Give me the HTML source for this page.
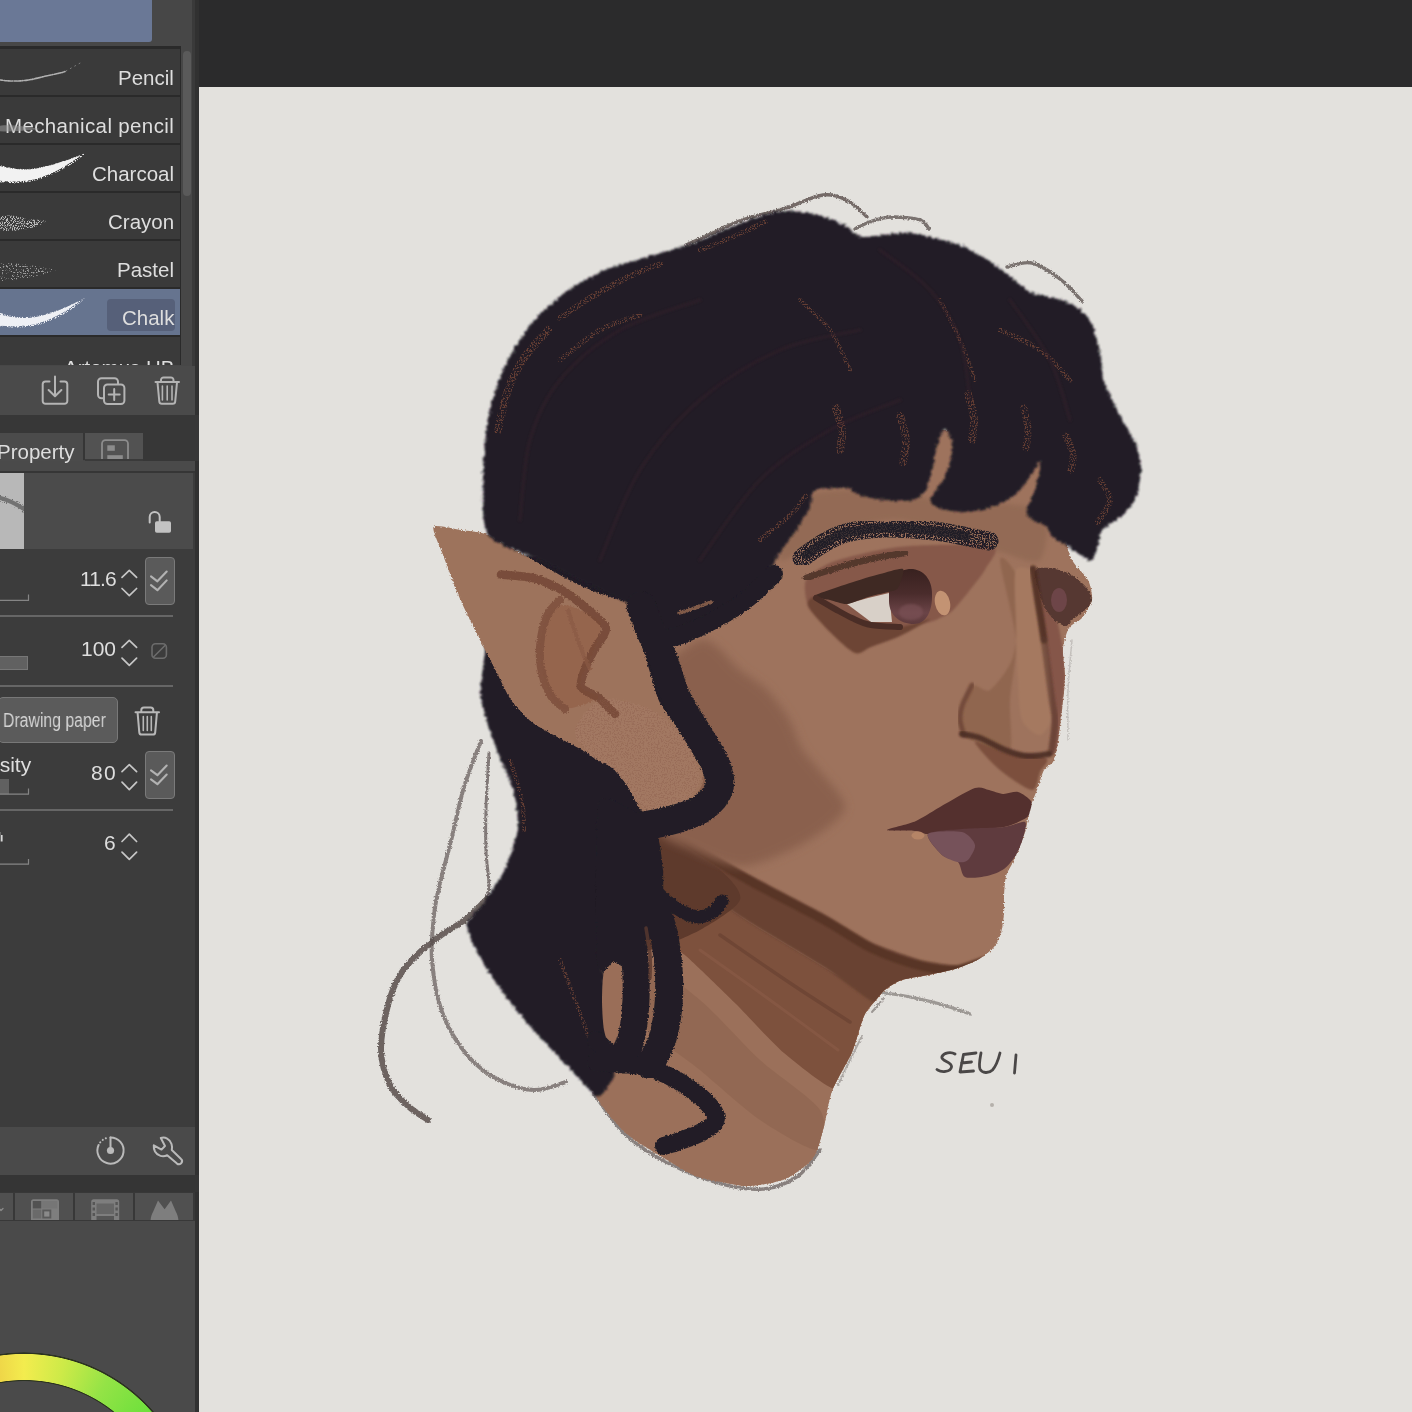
<!DOCTYPE html>
<html>
<head>
<meta charset="utf-8">
<title>Clip Studio Paint</title>
<style>
html,body{margin:0;padding:0;}
body{width:1412px;height:1412px;overflow:hidden;background:#2b2b2c;position:relative;font-family:"Liberation Sans",sans-serif;}
.abs{position:absolute;}
.lbl,.num,.txt{will-change:transform;}
#canvas{left:199px;top:87px;width:1213px;height:1325px;background:#e3e1dd;}
#panel{left:0;top:0;width:195px;height:1412px;background:#474747;}
#pedge{left:195px;top:0;width:4px;height:1412px;background:#313131;}
.row{position:absolute;left:0;width:180px;height:46px;background:#3a3a3a;}
.lbl{position:absolute;right:6px;color:#dedede;font-size:20.5px;white-space:nowrap;}
.num{position:absolute;color:#dedede;font-size:21px;white-space:nowrap;text-align:right;}
.sep{position:absolute;left:0;width:173px;height:2px;background:#666;}
svg{position:absolute;left:0;top:0;overflow:visible;}
</style>
</head>
<body>
<div class="abs" id="canvas"></div>
<div class="abs" id="panel"></div>
<div class="abs" id="pedge"></div>

<!-- PANEL-START -->
<div class="abs" style="left:0;top:0;width:152px;height:42px;background:#6a7896;border-radius:0 0 3px 0;"></div>
<div class="abs" style="left:0;top:46px;width:181px;height:319px;background:#2a2a2a;"></div>
<div class="row" style="top:49px;height:46px;"><div class="lbl" style="top:17px;">Pencil</div></div>
<div class="row" style="top:97px;height:46px;"><div class="lbl" style="top:17px;letter-spacing:0.36px;right:5.6px;">Mechanical pencil</div></div>
<div class="row" style="top:145px;height:46px;"><div class="lbl" style="top:17px;">Charcoal</div></div>
<div class="row" style="top:193px;height:46px;"><div class="lbl" style="top:17px;">Crayon</div></div>
<div class="row" style="top:241px;height:46px;"><div class="lbl" style="top:17px;">Pastel</div></div>
<div class="row" style="top:289px;height:46px;background:#66748f;"><div class="abs" style="left:107px;top:10px;width:68px;height:32px;background:#566079;border-radius:4px;"></div><div class="lbl" style="top:17px;">Chalk</div></div>
<div class="row" style="top:337px;height:28px;overflow:hidden;"><div class="lbl" style="top:19px;">Artemus HB</div></div>
<div class="abs" style="left:183px;top:51px;width:8px;height:145px;background:#5a5a5a;border-radius:4px;"></div>
<div class="abs" style="left:0;top:366px;width:195px;height:49px;background:#4a4a4a;"></div>
<div class="abs" style="left:0;top:415px;width:199px;height:18px;background:#373737;"></div>
<div class="abs" style="left:143px;top:433px;width:56px;height:28px;background:#373737;"></div>
<div class="abs" style="left:0;top:433px;width:83px;height:28px;background:#4b4b4b;"></div>
<div class="abs" style="left:83px;top:433px;width:2px;height:27px;background:#363636;"></div>
<div class="abs" style="left:85px;top:433px;width:58px;height:26px;background:#525252;"></div>
<div class="abs" style="left:85px;top:459px;width:58px;height:2px;background:#3a3a3a;"></div>
<div class="abs" style="left:0;top:461px;width:195px;height:10px;background:#4a4a4a;"></div>
<div class="abs" style="left:0;top:471px;width:195px;height:2px;background:#363636;"></div>
<div class="abs" style="left:0;top:473px;width:193px;height:76px;background:#4b4b4b;"></div>
<div class="abs" style="left:0;top:473px;width:24px;height:76px;background:#b8b8b8;"></div>
<div class="abs" style="left:0;top:549px;width:195px;height:578px;background:#3c3c3c;"></div>
<div class="abs" style="left:193px;top:473px;width:2px;height:76px;background:#3c3c3c;"></div>
<div class="abs txt" style="left:-3px;top:440px;color:#dedede;font-size:20.5px;">Property</div>
<div class="num" style="right:1296px;top:567px;letter-spacing:-0.9px;">11.6</div>
<div class="num" style="right:1296px;top:637px;">100</div>
<div class="num" style="right:1295px;top:761px;letter-spacing:1.300px;">80</div>
<div class="num" style="right:1296px;top:831px;">6</div>
<div class="sep" style="top:615px;"></div>
<div class="sep" style="top:685px;"></div>
<div class="sep" style="top:809px;"></div>
<div class="abs" style="left:-2px;top:697px;width:120px;height:46px;background:#5b5b5b;border:1px solid #787878;border-radius:5px;box-sizing:border-box;"></div>
<div class="abs txt" style="left:3px;top:709px;color:#d4d4d4;font-size:20px;white-space:nowrap;transform-origin:0 0;transform:scaleX(0.79);">Drawing paper</div>
<div class="abs txt" style="left:-12px;top:753px;color:#dedede;font-size:21px;white-space:nowrap;">nsity</div>
<div class="abs" style="left:145px;top:557px;width:30px;height:48px;background:#5a5a5a;border:1px solid #7a7a7a;border-radius:4px;box-sizing:border-box;"></div>
<div class="abs" style="left:145px;top:751px;width:30px;height:48px;background:#5a5a5a;border:1px solid #7a7a7a;border-radius:4px;box-sizing:border-box;"></div>
<div class="abs" style="left:-1px;top:656px;width:29px;height:14px;background:#616161;border:1px solid #777;box-sizing:border-box;"></div>
<div class="abs" style="left:-1px;top:779px;width:10px;height:15px;background:#616161;"></div>
<div class="abs" style="left:0;top:1127px;width:195px;height:48px;background:#4a4a4a;"></div>
<div class="abs" style="left:0;top:1175px;width:199px;height:17px;background:#353535;"></div>
<div class="abs" style="left:0;top:1192px;width:195px;height:220px;background:#4a4a4a;"></div>
<div class="abs" style="left:0;top:1192px;width:195px;height:29px;background:#383838;"></div>
<div class="abs" style="left:0;top:1193px;width:13px;height:27px;background:#505050;"></div>
<div class="abs" style="left:15px;top:1193px;width:58px;height:27px;background:#505050;"></div>
<div class="abs" style="left:75px;top:1193px;width:58px;height:27px;background:#505050;"></div>
<div class="abs" style="left:135px;top:1193px;width:58px;height:27px;background:#505050;"></div>
<div class="abs" style="left:0;top:1300px;width:195px;height:112px;overflow:hidden;"><div style="position:absolute;left:-148.500px;top:51.500px;width:344px;height:344px;border-radius:50%;background:#2c3320;-webkit-mask:radial-gradient(circle closest-side,transparent 0,transparent 142.500px,#000 143.200px,#000 171.300px,transparent 172px);mask:radial-gradient(circle closest-side,transparent 0,transparent 142.500px,#000 143.200px,#000 171.300px,transparent 172px);"></div><div style="position:absolute;left:-147.500px;top:52.500px;width:342px;height:342px;border-radius:50%;background:conic-gradient(from -40deg at 50% 50%, #e59a3a 0deg, #ecc844 25deg, #f3ec4e 40deg, #cdea48 54deg, #94e346 70deg, #6ee03c 88deg, #52d83a 110deg);-webkit-mask:radial-gradient(circle closest-side,transparent 0,transparent 143.600px,#000 144.300px,#000 169.700px,transparent 170.400px);mask:radial-gradient(circle closest-side,transparent 0,transparent 143.600px,#000 144.300px,#000 169.700px,transparent 170.400px);"></div></div>
<div class="abs" id="dstrip" style="left:192px;top:0;width:3px;height:366px;background:#3a3a3a;"></div>
<svg id="picons" width="199" height="1412" viewBox="0 0 199 1412" fill="none" stroke-linecap="round" stroke-linejoin="round">
<defs>
<filter id="grain" x="-5%" y="-20%" width="110%" height="140%"><feTurbulence type="fractalNoise" baseFrequency="0.9" numOctaves="2" seed="3" result="n"/><feColorMatrix in="n" type="matrix" values="0 0 0 0 0  0 0 0 0 0  0 0 0 0 0  0 0 0 -9 4.6" result="m"/><feComposite in="SourceGraphic" in2="m" operator="in"/></filter>
<filter id="grain2" x="-5%" y="-20%" width="110%" height="140%"><feTurbulence type="fractalNoise" baseFrequency="0.8" numOctaves="2" seed="8" result="n"/><feColorMatrix in="n" type="matrix" values="0 0 0 0 0  0 0 0 0 0  0 0 0 0 0  0 0 0 -9 3.9" result="m"/><feComposite in="SourceGraphic" in2="m" operator="in"/></filter>
<clipPath id="cl0"><rect x="0" y="49" width="180" height="316"/></clipPath>
<clipPath id="cth"><rect x="0" y="473" width="24" height="76"/></clipPath>
<clipPath id="ctab"><rect x="0" y="1193" width="195" height="27"/></clipPath>
<clipPath id="ctab2"><rect x="85" y="433" width="58" height="26"/></clipPath>
</defs>
<!-- brush previews -->
<g clip-path="url(#cl0)">
<path d="M-2 79.5 C10 82 25 81.5 38 78 S58 74 65 71.5" stroke="#d8d8d8" stroke-width="1.6" stroke-dasharray="2.5 1.2 1 1.5 3 1" opacity="0.75"/>
<path d="M66 71 L82 62" stroke="#bbb" stroke-width="1" stroke-dasharray="1 4" opacity="0.5"/>
<path d="M-2 126 C8 124 22 126 40 129 C22 131 8 132 -2 131Z" fill="#9a9a9a" opacity="0.55" stroke="none"/>
<path d="M-2 164 C8 168 18 169.5 28 169 C42 168 60 163 86 153 C72 166 52 176 34 181 C20 184 8 184 -2 182Z" fill="#f2f2f2" stroke="none" filter="url(#grain)"/>
<path d="M-2 165.500C8 168.500 18 170 28 169.500C42 168.500 60 163 80 155.500C66 167 50 175 34 179.500C20 182 8 182 -2 180.500Z" fill="#f2f2f2" stroke="none"/>
<path d="M-2 217 C8 214 18 216 26 219 C34 220 40 219 46 221 C40 226 30 229 20 230 C10 232 4 231 -2 230Z" fill="#bdbdbd" stroke="none" filter="url(#grain)"/>
<path d="M-2 264 C12 262 30 265 56 270 C40 276 20 281 -2 281Z" fill="#b8b8b8" stroke="none" filter="url(#grain2)" opacity="0.8"/>
<path d="M-2 312 C8 316 18 317.5 28 317 C42 316 60 311 85 298 C72 312 52 322 34 326 C20 328.5 8 328 -2 326Z" fill="#eef0f5" stroke="none" filter="url(#grain)"/>
<path d="M-2 314C8 317 18 318.500 28 318C42 317 60 311 79 301C66 312.500 50 320.500 34 324.500C20 326.500 8 326.500 -2 325.500Z" fill="#eef0f5" stroke="none"/>
</g>
<!-- toolbar icons -->
<g stroke="#b4b4b4" stroke-width="2">
<path d="M49.5 381.5H45.5a2.8 2.8 0 0 0-2.8 2.8V401a2.8 2.8 0 0 0 2.8 2.8H64.5a2.8 2.8 0 0 0 2.8-2.8V384.3a2.8 2.8 0 0 0-2.8-2.8H60.5"/>
<path d="M55 376.5V396M48.6 390L55 396.3L61.4 390"/>
<rect x="98" y="378.2" width="20" height="20" rx="3.5"/>
<rect x="104" y="384.5" width="20.4" height="19.5" rx="3.5" fill="#4a4a4a"/>
<path d="M114.2 389v11M108.7 394.5h11"/>
<path d="M155.5 382H179M161 381.5V380a2.6 2.6 0 0 1 2.6-2.6h7.3A2.6 2.6 0 0 1 173.500 380v1.500M157.500 382.500l1.800 19a2.500 2.500 0 0 0 2.500 2.300h10.900a2.500 2.500 0 0 0 2.500-2.300l1.800-19"/>
<path d="M162.400 386V400M167.200 386V400M172 386V400" stroke-width="1.600"/>
</g>
<!-- tab2 icon -->
<g clip-path="url(#ctab2)"><rect x="102" y="440.2" width="26" height="26" rx="3.500" stroke="#8c8c8c" stroke-width="1.800"/><rect x="107.300" y="445.300" width="7.500" height="5.500" fill="#8c8c8c"/><rect x="107.300" y="455.200" width="15.500" height="5" fill="#8c8c8c"/></g>
<!-- thumbnail stroke -->
<g clip-path="url(#cth)"><path d="M-4 497 C6 499 16 503 28 512" stroke="#6c6c6c" stroke-width="7" filter="url(#grain2)"/><path d="M-4 497 C6 499 16 503 28 512" stroke="#727272" stroke-width="4"/></g>
<!-- unlock -->
<rect x="155" y="521.300" width="16" height="11.400" rx="1.800" fill="#c2c2c2"/>
<path d="M149.700 522.500V517a5 5 0 0 1 10 0V521.500" stroke="#c2c2c2" stroke-width="2"/>
<!-- chevrons -->
<g stroke="#c6c6c6" stroke-width="1.700">
<path d="M122 577.400l7.300-7l7.300 7M122 588.500l7.300 7.200l7.300-7.200"/>
<path d="M122 647.400l7.300-7l7.300 7M122 658.200l7.300 7.200l7.300-7.200"/>
<path d="M122 771.600l7.300-7l7.300 7M122 782.200l7.300 7.400l7.300-7.400"/>
<path d="M122 841.500l7.300-7.300l7.300 7.300M122 852.200l7.300 7.200l7.300-7.200"/>
</g>
<!-- double checks -->
<g stroke="#b2b2b2" stroke-width="2.100">
<path d="M151 576.300l6.400 5l9.300-9.800M151 585.200l6.400 5l9.300-9.800"/>
<path d="M151 770.400l6.400 4.800l9.300-9.600M151 779.400l6.400 4.800l9.300-9.600"/>
</g>
<!-- disabled icon -->
<rect x="152" y="643.800" width="14.400" height="14.400" rx="3.500" stroke="#6c6c6c" stroke-width="1.600"/><path d="M153.500 657L165 645.500" stroke="#6c6c6c" stroke-width="1.600"/>
<!-- trash 2 -->
<g stroke="#b8b8b8" stroke-width="2">
<path d="M135.500 712.300H159M141.300 712V710a2.600 2.600 0 0 1 2.600-2.600h6.800a2.600 2.600 0 0 1 2.600 2.600v2M137.600 712.800l1.700 19.500a2.500 2.500 0 0 0 2.500 2.300h10.900a2.500 2.500 0 0 0 2.500-2.300l1.700-19.500"/>
<path d="M143.300 716.500V730.500M147.300 716.500V730.500M151.300 716.500V730.500" stroke-width="1.600"/>
</g>
<!-- slider brackets -->
<g stroke="#858585" stroke-width="1.200" stroke-linecap="butt">
<path d="M0 600.400H28.500V594.500M0 794.200H28.500V788.500M0 864.200H28.500V859"/>
</g>
<!-- fragment of label -->
<path d="M-0.500 832V841.500M1.800 835V841.500" stroke="#d8d8d8" stroke-width="1.600" stroke-linecap="butt"/>
<!-- bottom toolbar icons -->
<g stroke="#bababa" stroke-width="2">
<path d="M110.500 1137.400A13.100 13.100 0 1 1 98.600 1145"/>
<path d="M100.200 1142.400A13.100 13.100 0 0 1 107.500 1137.800" stroke-dasharray="0.100 3.400"/>
<path d="M110.500 1137.400V1150"/>
<circle cx="110.500" cy="1150.500" r="3.600" fill="#bababa" stroke="none"/>
<path d="M160.800 1138C165 1136.500 170 1139 171.500 1144C172.300 1146.500 172.200 1148.500 171.800 1150L180.800 1158.800A2.900 2.900 0 0 1 177 1163.600L167.200 1155.200C163 1157.500 157.500 1156 155 1151.500C154 1149.500 153.600 1147.500 153.800 1145.300L161.500 1149.600L165 1146Z"/>
</g>
<!-- bottom tabs icons -->
<g clip-path="url(#ctab)" fill="#7e7e7e" stroke="none">
<path d="M-1 1208.500l2 2l2-2" stroke="#8a8a8a" stroke-width="1.300" fill="none"/>
<path d="M33.500 1199.300h23a2.500 2.500 0 0 1 2.500 2.500V1222H31V1201.800a2.500 2.500 0 0 1 2.500-2.500z"/>
<rect x="32.800" y="1201" width="8.500" height="7.500" fill="#525252"/><rect x="42.300" y="1209.500" width="9" height="9" fill="#5a5a5a"/><rect x="44.200" y="1211.400" width="5.200" height="5.200" fill="#8a8a8a"/><rect x="32.800" y="1209.500" width="8.500" height="9" fill="#6a6a6a"/><rect x="42.300" y="1201" width="15" height="7.500" fill="#767676"/>
<path d="M93.700 1199.300h23a2.500 2.500 0 0 1 2.500 2.500V1222H91.200V1201.800a2.500 2.500 0 0 1 2.500-2.500z"/>
<rect x="96.500" y="1203.500" width="17.500" height="10.500" fill="#666"/>
<g fill="#565656"><rect x="92.600" y="1202" width="2.400" height="3"/><rect x="92.600" y="1207.500" width="2.400" height="3"/><rect x="92.600" y="1213" width="2.400" height="3"/><rect x="115.400" y="1202" width="2.400" height="3"/><rect x="115.400" y="1207.500" width="2.400" height="3"/><rect x="115.400" y="1213" width="2.400" height="3"/><rect x="96.500" y="1216" width="17.500" height="5"/></g>
<path d="M150.500 1222c0-4 1-7 2.500-10l5-11.600l6.600 8.800l6.400-8.800l5 11.600c1.500 3 2.500 6 2.500 10z"/>
</g>
</svg>
<!-- PANEL-END -->

<svg id="art" width="1412" height="1412" viewBox="0 0 1412 1412">
<!-- ART-START -->
<defs><filter id="rough" x="-5%" y="-5%" width="110%" height="110%"><feTurbulence type="fractalNoise" baseFrequency="0.35" numOctaves="2" seed="5" result="n"/><feDisplacementMap in="SourceGraphic" in2="n" scale="5" xChannelSelector="R" yChannelSelector="G" result="d"/><feGaussianBlur in="d" stdDeviation="0.8"/></filter><filter id="rough2" x="-5%" y="-5%" width="110%" height="110%"><feTurbulence type="fractalNoise" baseFrequency="0.6" numOctaves="2" seed="11" result="n"/><feDisplacementMap in="SourceGraphic" in2="n" scale="3.5" xChannelSelector="R" yChannelSelector="G" result="d"/><feGaussianBlur in="d" stdDeviation="0.7"/></filter><filter id="soft" x="-10%" y="-10%" width="120%" height="120%"><feGaussianBlur stdDeviation="2.5"/></filter><filter id="soft1" x="-10%" y="-10%" width="120%" height="120%"><feGaussianBlur stdDeviation="1.2"/></filter><filter id="soft2" x="-10%" y="-10%" width="120%" height="120%"><feGaussianBlur stdDeviation="5"/></filter><filter id="chalk" x="-5%" y="-5%" width="110%" height="110%"><feTurbulence type="fractalNoise" baseFrequency="0.7" numOctaves="2" seed="21" result="n"/><feColorMatrix in="n" type="matrix" values="0 0 0 0 0  0 0 0 0 0  0 0 0 0 0  0 0 0 -7 3.6" result="m"/><feComposite in="SourceGraphic" in2="m" operator="in"/></filter><filter id="chalk2" x="-5%" y="-20%" width="110%" height="140%"><feTurbulence type="fractalNoise" baseFrequency="0.75" numOctaves="2" seed="4" result="n"/><feColorMatrix in="n" type="matrix" values="0 0 0 0 0  0 0 0 0 0  0 0 0 0 0  0 0 0 -8 4.9" result="m"/><feComposite in="SourceGraphic" in2="m" operator="in"/></filter><linearGradient id="irisg" x1="0" y1="0" x2="0" y2="1"><stop offset="0" stop-color="#38211f"/><stop offset="0.45" stop-color="#4a2c2c"/><stop offset="0.8" stop-color="#6b4447"/><stop offset="1" stop-color="#5d3a3c"/></linearGradient></defs>
<g filter="url(#rough2)">
<path d="M686.0 245.0 C690.8 242.8 705.7 236.2 715.0 232.0 C724.3 227.8 730.2 224.0 742.0 220.0 C753.8 216.0 772.5 212.2 786.0 208.0 C799.5 203.8 812.7 196.2 823.0 195.0 C833.3 193.8 840.7 197.3 848.0 201.0 C855.3 204.7 863.8 214.3 867.0 217.0" fill="none" stroke="#574d4b" stroke-width="3.4" stroke-linecap="round" stroke-linejoin="round" opacity="0.8" />
<path d="M855.0 229.0 C857.8 227.7 865.8 223.0 872.0 221.0 C878.2 219.0 884.0 217.2 892.0 217.0 C900.0 216.8 913.8 218.0 920.0 220.0 C926.2 222.0 927.5 227.5 929.0 229.0" fill="none" stroke="#574d4b" stroke-width="3.4" stroke-linecap="round" stroke-linejoin="round" opacity="0.75" />
<path d="M1007.0 267.0 C1011.2 266.3 1023.2 261.0 1032.0 263.0 C1040.8 265.0 1051.7 272.7 1060.0 279.0 C1068.3 285.3 1078.3 297.3 1082.0 301.0" fill="none" stroke="#574d4b" stroke-width="3.4" stroke-linecap="round" stroke-linejoin="round" opacity="0.75" />
<path d="M489.0 753.0 C488.5 762.3 486.5 792.7 486.0 809.0 C485.5 825.3 485.5 838.3 486.0 851.0 C486.5 863.7 489.0 876.7 489.0 885.0 C489.0 893.3 486.5 898.3 486.0 901.0" fill="none" stroke="#574d4b" stroke-width="3" stroke-linecap="round" stroke-linejoin="round" opacity="0.7" />
<path d="M487.0 899.0 C483.5 902.3 473.8 912.8 466.0 919.0 C458.2 925.2 447.8 930.3 440.0 936.0 C432.2 941.7 425.7 946.5 419.0 953.0 C412.3 959.5 405.2 966.3 400.0 975.0 C394.8 983.7 391.2 992.5 388.0 1005.0 C384.8 1017.5 380.7 1036.7 381.0 1050.0 C381.3 1063.3 385.5 1075.7 390.0 1085.0 C394.5 1094.3 401.7 1100.2 408.0 1106.0 C414.3 1111.8 424.7 1117.7 428.0 1120.0" fill="none" stroke="#574d4b" stroke-width="6" stroke-linecap="round" stroke-linejoin="round" opacity="0.85" />
<path d="M481.0 741.0 C478.2 748.7 469.0 770.3 464.0 787.0 C459.0 803.7 455.0 825.0 451.0 841.0 C447.0 857.0 442.8 870.7 440.0 883.0 C437.2 895.3 435.3 902.2 434.0 915.0 C432.7 927.8 430.7 943.8 432.0 960.0 C433.3 976.2 436.2 996.2 442.0 1012.0 C447.8 1027.8 457.5 1043.7 467.0 1055.0 C476.5 1066.3 487.8 1074.2 499.0 1080.0 C510.2 1085.8 522.8 1089.7 534.0 1090.0 C545.2 1090.3 560.7 1083.3 566.0 1082.0" fill="none" stroke="#574d4b" stroke-width="4" stroke-linecap="round" stroke-linejoin="round" opacity="0.65" />
<path d="M878.0 992.0 C882.5 992.7 894.7 994.0 905.0 996.0 C915.3 998.0 929.2 1001.0 940.0 1004.0 C950.8 1007.0 965.0 1012.3 970.0 1014.0" fill="none" stroke="#574d4b" stroke-width="3.2" stroke-linecap="round" stroke-linejoin="round" opacity="0.5" />
<path d="M884.0 998.0 L872.0 1012.0" fill="none" stroke="#574d4b" stroke-width="2" stroke-linecap="round" stroke-linejoin="round" opacity="0.5" />
<path d="M594.0 1094.0 C599.3 1100.8 613.7 1123.5 626.0 1135.0 C638.3 1146.5 652.0 1154.8 668.0 1163.0 C684.0 1171.2 706.0 1179.7 722.0 1184.0 C738.0 1188.3 751.3 1190.3 764.0 1189.0 C776.7 1187.7 788.7 1182.5 798.0 1176.0 C807.3 1169.5 816.3 1154.3 820.0 1150.0" fill="none" stroke="#574d4b" stroke-width="3.5" stroke-linecap="round" stroke-linejoin="round" opacity="0.65" />
<path d="M1072.0 640.0 C1071.3 648.3 1068.7 673.3 1068.0 690.0 C1067.3 706.7 1068.0 731.7 1068.0 740.0" fill="none" stroke="#574d4b" stroke-width="1.5" stroke-linecap="round" stroke-linejoin="round" opacity="0.22" />
<path d="M838.0 1085.0 C840.0 1080.8 846.0 1068.2 850.0 1060.0 C854.0 1051.8 860.0 1040.0 862.0 1036.0" fill="none" stroke="#574d4b" stroke-width="2" stroke-linecap="round" stroke-linejoin="round" opacity="0.4" />
</g>
<g filter="url(#rough2)">
<path d="M700.0 560.0 C721.3 542.7 768.0 497.3 800.0 480.0 C832.0 462.7 908.0 432.7 940.0 430.0 C972.0 427.3 1023.7 446.7 1040.0 460.0 C1056.3 473.3 1057.7 516.7 1062.0 530.0 C1066.3 543.3 1068.5 553.3 1072.0 560.0 C1075.5 566.7 1085.3 574.7 1088.0 580.0 C1090.7 585.3 1092.8 594.9 1092.0 600.0 C1091.2 605.1 1085.1 614.3 1082.0 618.0 C1078.9 621.7 1071.5 623.9 1069.0 628.0 C1066.5 632.1 1063.5 642.2 1063.0 649.0 C1062.5 655.8 1065.3 669.8 1065.0 679.0 C1064.7 688.2 1062.1 708.8 1061.0 718.0 C1059.9 727.2 1058.1 742.1 1057.0 748.0 C1055.9 753.9 1054.7 759.1 1053.0 762.0 C1051.3 764.9 1046.1 766.3 1044.0 770.0 C1041.9 773.7 1038.9 784.9 1037.0 790.0 C1035.1 795.1 1031.3 803.5 1030.0 808.0 C1028.7 812.5 1027.9 820.0 1027.0 824.0 C1026.1 828.0 1024.9 832.9 1023.0 838.0 C1021.1 843.1 1015.3 856.9 1013.0 862.0 C1010.7 867.1 1007.2 871.5 1006.0 876.0 C1004.8 880.5 1004.3 891.1 1004.0 896.0 C1003.7 900.9 1004.4 908.1 1004.0 913.0 C1003.6 917.9 1002.3 928.5 1001.0 933.0 C999.7 937.5 996.9 943.5 994.0 947.0 C991.1 950.5 984.2 956.1 979.0 959.0 C973.8 961.9 961.8 966.9 955.0 969.0 C948.2 971.1 935.1 973.5 928.0 975.0 C920.9 976.5 907.6 978.1 902.0 980.0 C896.4 981.9 889.5 986.3 886.0 989.0 C882.5 991.7 878.9 996.4 876.0 1000.0 C873.1 1003.6 867.2 1009.1 864.0 1016.0 C860.8 1022.9 856.3 1042.0 852.0 1052.0 C847.7 1062.0 835.7 1081.1 832.0 1091.0 C828.3 1100.9 826.5 1117.1 824.0 1126.0 C821.5 1134.9 818.2 1150.9 813.0 1158.0 C807.8 1165.1 793.5 1175.3 785.0 1179.0 C776.5 1182.7 757.4 1185.6 749.0 1186.0 C740.6 1186.4 729.1 1183.3 722.0 1182.0 C714.9 1180.7 703.1 1178.8 696.0 1176.0 C688.9 1173.2 678.3 1166.7 669.0 1161.0 C659.7 1155.3 635.7 1141.7 626.0 1133.0 C616.3 1124.3 601.1 1105.7 596.0 1096.0 C590.9 1086.3 589.6 1072.8 588.0 1060.0 C586.4 1047.2 583.7 1028.0 584.0 1000.0 C584.3 972.0 582.5 876.7 590.0 850.0 C597.5 823.3 636.0 820.0 640.0 800.0 C644.0 780.0 620.0 725.3 620.0 700.0 C620.0 674.7 629.3 628.7 640.0 610.0 C650.7 591.3 678.7 577.3 700.0 560.0Z" fill="#9e735d" />
</g>
<clipPath id="cface"><path d="M700.0 560.0 C721.3 542.7 768.0 497.3 800.0 480.0 C832.0 462.7 908.0 432.7 940.0 430.0 C972.0 427.3 1023.7 446.7 1040.0 460.0 C1056.3 473.3 1057.7 516.7 1062.0 530.0 C1066.3 543.3 1068.5 553.3 1072.0 560.0 C1075.5 566.7 1085.3 574.7 1088.0 580.0 C1090.7 585.3 1092.8 594.9 1092.0 600.0 C1091.2 605.1 1085.1 614.3 1082.0 618.0 C1078.9 621.7 1071.5 623.9 1069.0 628.0 C1066.5 632.1 1063.5 642.2 1063.0 649.0 C1062.5 655.8 1065.3 669.8 1065.0 679.0 C1064.7 688.2 1062.1 708.8 1061.0 718.0 C1059.9 727.2 1058.1 742.1 1057.0 748.0 C1055.9 753.9 1054.7 759.1 1053.0 762.0 C1051.3 764.9 1046.1 766.3 1044.0 770.0 C1041.9 773.7 1038.9 784.9 1037.0 790.0 C1035.1 795.1 1031.3 803.5 1030.0 808.0 C1028.7 812.5 1027.9 820.0 1027.0 824.0 C1026.1 828.0 1024.9 832.9 1023.0 838.0 C1021.1 843.1 1015.3 856.9 1013.0 862.0 C1010.7 867.1 1007.2 871.5 1006.0 876.0 C1004.8 880.5 1004.3 891.1 1004.0 896.0 C1003.7 900.9 1004.4 908.1 1004.0 913.0 C1003.6 917.9 1002.3 928.5 1001.0 933.0 C999.7 937.5 996.9 943.5 994.0 947.0 C991.1 950.5 984.2 956.1 979.0 959.0 C973.8 961.9 961.8 966.9 955.0 969.0 C948.2 971.1 935.1 973.5 928.0 975.0 C920.9 976.5 907.6 978.1 902.0 980.0 C896.4 981.9 889.5 986.3 886.0 989.0 C882.5 991.7 878.9 996.4 876.0 1000.0 C873.1 1003.6 867.2 1009.1 864.0 1016.0 C860.8 1022.9 856.3 1042.0 852.0 1052.0 C847.7 1062.0 835.7 1081.1 832.0 1091.0 C828.3 1100.9 826.5 1117.1 824.0 1126.0 C821.5 1134.9 818.2 1150.9 813.0 1158.0 C807.8 1165.1 793.5 1175.3 785.0 1179.0 C776.5 1182.7 757.4 1185.6 749.0 1186.0 C740.6 1186.4 729.1 1183.3 722.0 1182.0 C714.9 1180.7 703.1 1178.8 696.0 1176.0 C688.9 1173.2 678.3 1166.7 669.0 1161.0 C659.7 1155.3 635.7 1141.7 626.0 1133.0 C616.3 1124.3 601.1 1105.7 596.0 1096.0 C590.9 1086.3 589.6 1072.8 588.0 1060.0 C586.4 1047.2 583.7 1028.0 584.0 1000.0 C584.3 972.0 582.5 876.7 590.0 850.0 C597.5 823.3 636.0 820.0 640.0 800.0 C644.0 780.0 620.0 725.3 620.0 700.0 C620.0 674.7 629.3 628.7 640.0 610.0 C650.7 591.3 678.7 577.3 700.0 560.0Z"/></clipPath>
<g clip-path="url(#cface)">
<path d="M560.0 820.0 L660.0 822.0 L694.0 842.0 L752.0 876.0 L824.0 914.0 L873.0 943.0 L921.0 960.0 L957.0 965.0 L1000.0 950.0 L1000.0 1200.0 L560.0 1200.0Z" fill="#9b705a" />
<path d="M640.0 960.0 C648.0 957.3 684.0 986.7 700.0 1000.0 C716.0 1013.3 744.0 1045.3 760.0 1060.0 C776.0 1074.7 812.3 1098.0 820.0 1110.0 C827.7 1122.0 826.0 1148.7 818.0 1150.0 C810.0 1151.3 775.7 1130.7 760.0 1120.0 C744.3 1109.3 716.0 1083.3 700.0 1070.0 C684.0 1056.7 648.0 1034.7 640.0 1020.0 C632.0 1005.3 632.0 962.7 640.0 960.0Z" fill="#8f6550" opacity="0.7"/>
<path d="M640.0 870.0 C645.4 866.6 682.8 880.6 694.0 886.0 C705.2 891.4 738.9 915.8 752.0 924.0 C765.1 932.2 812.9 960.4 825.0 968.0 C837.1 975.6 869.7 992.8 873.0 1000.0 C876.3 1007.2 861.5 1031.0 858.0 1040.0 C854.5 1049.0 845.4 1088.7 838.0 1090.0 C830.6 1091.3 794.2 1061.6 784.0 1053.0 C773.8 1044.4 745.8 1013.7 736.0 1004.0 C726.2 994.3 695.6 964.4 686.0 956.0 C676.4 947.6 644.6 928.6 640.0 920.0 C635.4 911.4 634.6 873.4 640.0 870.0Z" fill="#7d513d" />
<path d="M720.0 935.0 C731.7 943.0 768.3 968.5 790.0 983.0 C811.7 997.5 840.0 1015.5 850.0 1022.0" fill="none" stroke="#6a4232" stroke-width="3.5" stroke-linecap="round" stroke-linejoin="round" opacity="0.7" />
<path d="M700.0 950.0 C711.7 958.3 747.0 983.3 770.0 1000.0 C793.0 1016.7 826.7 1041.7 838.0 1050.0" fill="none" stroke="#8a5c47" stroke-width="3" stroke-linecap="round" stroke-linejoin="round" opacity="0.6" />
<g filter="url(#soft1)">
<path d="M640.0 812.0 C642.0 808.2 654.6 819.0 660.0 822.0 C665.4 825.0 684.8 836.6 694.0 842.0 C703.2 847.4 739.0 868.8 752.0 876.0 C765.0 883.2 811.9 907.3 824.0 914.0 C836.1 920.7 863.3 938.4 873.0 943.0 C882.7 947.6 912.6 957.8 921.0 960.0 C929.4 962.2 950.1 965.5 957.0 965.0 C963.9 964.5 986.7 954.0 990.0 955.0 C993.3 956.0 993.5 972.7 990.0 975.0 C986.5 977.3 961.2 977.4 955.0 978.0 C948.8 978.6 933.3 980.2 928.0 981.0 C922.7 981.8 906.2 984.7 902.0 986.0 C897.8 987.3 888.9 992.4 886.0 994.0 C883.1 995.6 879.1 1004.6 873.0 1002.0 C866.9 999.4 837.1 975.8 825.0 968.0 C812.9 960.2 765.1 932.2 752.0 924.0 C738.9 915.8 703.2 891.6 694.0 886.0 C684.8 880.4 665.4 870.6 660.0 868.0 C654.6 865.4 642.0 865.6 640.0 860.0 C638.0 854.4 638.0 815.8 640.0 812.0Z" fill="#694333" />
<path d="M650.0 822.0 C657.3 826.3 677.0 838.0 694.0 848.0 C711.0 858.0 730.3 870.0 752.0 882.0 C773.7 894.0 803.8 908.8 824.0 920.0 C844.2 931.2 856.8 941.3 873.0 949.0 C889.2 956.7 907.0 962.5 921.0 966.0 C935.0 969.5 946.3 970.7 957.0 970.0 C967.7 969.3 980.3 963.3 985.0 962.0" fill="none" stroke="#553326" stroke-width="9" stroke-linecap="round" stroke-linejoin="round" opacity="0.8" />
</g>
<path d="M600.0 800.0 C610.7 790.7 644.0 820.7 660.0 830.0 C676.0 839.3 709.3 860.7 720.0 870.0 C730.7 879.3 742.7 892.0 740.0 900.0 C737.3 908.0 712.0 923.3 700.0 930.0 C688.0 936.7 663.3 946.0 650.0 950.0 C636.7 954.0 609.3 966.7 600.0 960.0 C590.7 953.3 580.0 921.3 580.0 900.0 C580.0 878.7 589.3 809.3 600.0 800.0Z" fill="#5e3a2c" />
</g>
<g clip-path="url(#cface)">
<g filter="url(#soft2)">
<path d="M700.0 640.0 C713.3 636.0 731.1 663.3 740.0 670.0 C748.9 676.7 760.5 683.5 767.0 690.0 C773.5 696.5 784.3 711.1 789.0 719.0 C793.7 726.9 798.0 742.2 802.0 749.0 C806.0 755.8 813.3 762.1 819.0 770.0 C824.7 777.9 846.7 798.4 845.0 808.0 C843.3 817.6 819.3 834.3 806.0 842.0 C792.7 849.7 760.2 864.9 745.0 866.0 C729.8 867.1 704.7 856.1 692.0 850.0 C679.3 843.9 656.9 840.0 650.0 820.0 C643.1 800.0 633.3 724.0 640.0 700.0 C646.7 676.0 686.7 644.0 700.0 640.0Z" fill="#8a614d" />
</g><g filter="url(#soft)">
<path d="M780.0 560.0 C776.0 555.3 789.3 509.3 800.0 500.0 C810.7 490.7 841.3 490.0 860.0 490.0 C878.7 490.0 916.0 497.3 940.0 500.0 C964.0 502.7 1026.7 502.0 1040.0 510.0 C1053.3 518.0 1045.3 554.4 1040.0 560.0 C1034.7 565.6 1018.7 557.3 1000.0 552.0 C981.3 546.7 922.7 522.3 900.0 520.0 C877.3 517.7 846.0 529.7 830.0 535.0 C814.0 540.3 784.0 564.7 780.0 560.0Z" fill="#936a55" />
</g>
<g filter="url(#soft1)">
<path d="M806.0 580.0 C808.9 574.3 821.5 566.7 830.0 563.0 C838.5 559.3 859.3 554.3 870.0 552.0 C880.7 549.7 893.7 546.8 910.0 546.0 C926.3 545.2 981.9 543.1 992.0 546.0 C1002.1 548.9 988.9 562.1 986.0 568.0 C983.1 573.9 974.0 584.8 970.0 590.0 C966.0 595.2 958.9 603.8 956.0 607.0 C953.1 610.2 951.5 612.0 948.0 614.0 C944.5 616.0 936.4 620.1 930.0 622.0 C923.6 623.9 907.9 627.2 900.0 628.0 C892.1 628.8 877.0 625.1 871.0 628.0 C865.0 630.9 859.1 648.4 855.0 650.0 C850.9 651.6 844.4 643.7 840.0 640.0 C835.6 636.3 826.3 626.5 822.0 622.0 C817.7 617.5 810.1 611.6 808.0 606.0 C805.9 600.4 803.1 585.7 806.0 580.0Z" fill="#86584a" />
<path d="M808.0 606.0 C806.3 601.3 811.1 595.5 817.0 597.0 C822.9 598.5 844.8 613.1 852.0 617.0 C859.2 620.9 864.6 624.7 871.0 626.0 C877.4 627.3 892.1 627.9 900.0 627.0 C907.9 626.1 930.0 617.8 930.0 619.0 C930.0 620.2 907.9 632.3 900.0 636.0 C892.1 639.7 877.0 644.7 871.0 647.0 C865.0 649.3 860.5 655.0 855.0 653.0 C849.5 651.0 836.3 638.3 830.0 632.0 C823.7 625.7 809.7 610.7 808.0 606.0Z" fill="#6d4535" />
</g>
<g filter="url(#soft1)">
<path d="M1000.0 560.0 C1000.0 551.3 1013.6 567.0 1016.0 575.0 C1018.4 583.0 1018.5 608.7 1018.0 620.0 C1017.5 631.3 1015.7 650.7 1012.0 660.0 C1008.3 669.3 995.3 686.5 990.0 690.0 C984.7 693.5 976.0 682.5 972.0 686.0 C968.0 689.5 961.1 709.3 960.0 716.0 C958.9 722.7 960.7 732.1 964.0 736.0 C967.3 739.9 978.9 742.9 985.0 745.0 C991.1 747.1 1006.7 758.0 1010.0 752.0 C1013.3 746.0 1009.2 714.9 1010.0 700.0 C1010.8 685.1 1017.3 658.7 1016.0 640.0 C1014.7 621.3 1000.0 568.7 1000.0 560.0Z" fill="#90664f" />
<path d="M1016.0 570.0 C1018.7 564.0 1032.5 568.3 1036.0 575.0 C1039.5 581.7 1040.4 607.3 1042.0 620.0 C1043.6 632.7 1046.7 657.2 1048.0 670.0 C1049.3 682.8 1053.1 707.3 1052.0 716.0 C1050.9 724.7 1044.0 734.5 1040.0 735.0 C1036.0 735.5 1024.9 727.3 1022.0 720.0 C1019.1 712.7 1018.8 693.3 1018.0 680.0 C1017.2 666.7 1016.3 634.7 1016.0 620.0 C1015.7 605.3 1013.3 576.0 1016.0 570.0Z" fill="#a57961" />
<path d="M1036.0 572.0 C1037.3 569.3 1048.4 589.7 1052.0 600.0 C1055.6 610.3 1061.3 638.5 1063.0 649.0 C1064.7 659.5 1065.3 669.8 1065.0 679.0 C1064.7 688.2 1062.1 708.8 1061.0 718.0 C1059.9 727.2 1058.5 743.5 1057.0 748.0 C1055.5 752.5 1050.7 756.3 1050.0 752.0 C1049.3 747.7 1052.3 728.3 1052.0 716.0 C1051.7 703.7 1049.3 672.8 1048.0 660.0 C1046.7 647.2 1043.6 631.7 1042.0 620.0 C1040.4 608.3 1034.7 574.7 1036.0 572.0Z" fill="#85574a" />
<path d="M975.0 742.0 C975.7 739.6 995.5 749.9 1005.0 752.0 C1014.5 754.1 1041.3 755.3 1046.0 758.0 C1050.7 760.7 1041.9 767.7 1040.0 772.0 C1038.1 776.3 1037.3 790.3 1032.0 790.0 C1026.7 789.7 1007.6 776.4 1000.0 770.0 C992.4 763.6 974.3 744.4 975.0 742.0Z" fill="#7b4f3d" />
</g>
</g>
<g filter="url(#rough)">
<path d="M500.0 560.0 C484.8 565.3 488.0 588.1 486.0 600.0 C484.0 611.9 485.7 635.9 485.0 649.0 C484.3 662.1 479.5 684.8 481.0 698.0 C482.5 711.2 491.7 735.7 496.0 748.0 C500.3 760.3 510.1 779.3 513.0 790.0 C515.9 800.7 519.2 817.2 518.0 828.0 C516.8 838.8 508.5 861.1 504.0 871.0 C499.5 880.9 488.9 894.8 484.0 902.0 C479.1 909.2 467.4 917.4 467.0 925.0 C466.6 932.6 475.7 949.3 481.0 959.0 C486.3 968.7 499.8 988.3 507.0 998.0 C514.2 1007.7 527.5 1023.6 535.0 1032.0 C542.5 1040.4 556.6 1054.2 563.0 1061.0 C569.4 1067.8 578.1 1078.3 583.0 1083.0 C587.9 1087.7 595.1 1099.3 600.0 1096.0 C604.9 1092.7 619.2 1070.8 620.0 1058.0 C620.8 1045.2 608.7 1017.3 606.0 1000.0 C603.3 982.7 600.4 943.3 600.0 928.0 C599.6 912.7 601.8 896.5 603.0 885.0 C604.2 873.5 604.1 850.7 609.0 842.0 C613.9 833.3 630.5 825.6 640.0 820.0 C649.5 814.4 677.3 824.0 680.0 800.0 C682.7 776.0 670.7 672.0 660.0 640.0 C649.3 608.0 621.3 570.7 600.0 560.0 C578.7 549.3 515.2 554.7 500.0 560.0Z" fill="#211e27" />
</g>
<path d="M604.0 972.0 C605.5 967.2 610.6 964.0 613.0 964.0 C615.4 964.0 620.7 967.2 622.0 972.0 C623.3 976.8 623.4 992.3 623.0 1000.0 C622.6 1007.7 620.6 1023.6 619.0 1030.0 C617.4 1036.4 613.0 1048.0 611.0 1048.0 C609.0 1048.0 605.2 1036.4 604.0 1030.0 C602.8 1023.6 602.0 1007.7 602.0 1000.0 C602.0 992.3 602.5 976.8 604.0 972.0Z" fill="#9a6e58" />
<g filter="url(#rough2)">
<path d="M433.6 527.0 C435.6 524.1 453.7 529.1 460.0 530.0 C466.3 530.9 479.5 531.5 488.0 535.0 C496.5 538.5 522.4 554.2 533.0 560.0 C543.6 565.8 569.7 580.6 579.0 585.0 C588.3 589.4 606.5 595.7 613.0 598.0 C619.5 600.3 631.9 600.7 635.0 605.0 C638.1 609.3 638.4 627.5 640.0 635.0 C641.6 642.5 646.7 661.1 649.0 669.0 C651.3 676.9 656.3 695.6 660.0 703.0 C663.7 710.4 676.5 725.9 681.0 732.0 C685.5 738.1 696.4 749.2 699.0 755.0 C701.6 760.8 704.3 776.2 703.0 782.0 C701.7 787.8 692.4 800.6 688.0 805.0 C683.6 809.4 669.8 818.7 665.0 820.0 C660.2 821.3 650.3 817.9 647.0 816.0 C643.7 814.1 639.2 807.5 637.0 804.0 C634.8 800.5 630.6 790.2 628.0 786.0 C625.4 781.8 619.2 771.6 615.0 768.0 C610.8 764.4 597.8 758.1 592.0 755.0 C586.2 751.9 571.9 744.7 565.0 741.0 C558.1 737.3 539.3 727.8 533.0 723.0 C526.7 718.2 515.4 706.3 511.0 700.0 C506.6 693.7 498.3 675.3 495.0 669.0 C491.7 662.7 487.0 653.9 483.0 646.0 C479.0 638.1 465.7 611.6 461.0 601.0 C456.3 590.4 446.2 563.6 443.0 555.0 C439.8 546.4 431.6 529.9 433.6 527.0Z" fill="#9d735c" />
</g>
<g filter="url(#rough2)">
<path d="M600.0 700.0 C608.7 696.7 630.8 702.1 640.0 705.0 C649.2 707.9 662.3 716.5 669.0 722.0 C675.7 727.5 685.9 738.3 690.0 746.0 C694.1 753.7 700.5 772.5 700.0 780.0 C699.5 787.5 690.8 797.2 686.0 802.0 C681.2 806.8 669.1 814.7 664.0 816.0 C658.9 817.3 651.7 814.1 648.0 812.0 C644.3 809.9 638.9 803.7 636.0 800.0 C633.1 796.3 629.2 788.3 626.0 784.0 C622.8 779.7 616.8 771.9 612.0 768.0 C607.2 764.1 594.9 760.1 590.0 755.0 C585.1 749.9 573.7 737.3 575.0 730.0 C576.3 722.7 591.3 703.3 600.0 700.0Z" fill="#a27862" />
<path d="M565.0 605.0 C572.1 605.8 596.1 616.0 600.0 622.0 C603.9 628.0 596.0 643.7 594.0 650.0 C592.0 656.3 586.7 664.1 585.0 669.0 C583.3 673.9 579.1 683.1 581.0 687.0 C582.9 690.9 601.1 695.1 599.0 698.0 C596.9 700.9 571.4 709.3 565.0 709.0 C558.6 708.7 553.9 700.8 551.0 696.0 C548.1 691.2 544.5 679.7 543.0 673.0 C541.5 666.3 539.5 653.6 540.0 646.0 C540.5 638.4 543.7 621.5 547.0 616.0 C550.3 610.5 557.9 604.2 565.0 605.0Z" fill="#95654e" />
<path d="M501.0 574.6 C504.7 575.0 526.1 576.3 533.0 578.0 C539.9 579.7 553.9 585.6 560.0 589.0 C566.1 592.4 579.6 602.5 585.0 607.0 C590.4 611.5 605.0 623.0 606.0 628.0 C607.0 633.0 596.5 645.2 594.0 650.0 C591.5 654.8 586.5 664.7 585.0 669.0 C583.5 673.3 579.4 683.6 581.0 687.0 C582.6 690.4 595.0 694.9 599.0 698.0 C603.0 701.1 613.1 712.1 615.0 714.0" fill="none" stroke="#754937" stroke-width="8.5" stroke-linecap="round" stroke-linejoin="round" opacity="0.9" />
<path d="M560.0 600.0 C557.8 602.7 550.3 608.3 547.0 616.0 C543.7 623.7 540.8 636.5 540.0 646.0 C539.2 655.5 540.2 664.7 542.0 673.0 C543.8 681.3 547.2 690.0 551.0 696.0 C554.8 702.0 562.7 706.8 565.0 709.0" fill="none" stroke="#7e503d" stroke-width="8" stroke-linecap="round" stroke-linejoin="round" opacity="0.85" />
<path d="M568.0 610.0 C570.0 616.0 576.3 636.2 580.0 646.0 C583.7 655.8 588.3 665.2 590.0 669.0" fill="none" stroke="#8a5a44" stroke-width="4" stroke-linecap="round" stroke-linejoin="round" opacity="0.7" />
</g>
<g filter="url(#chalk)">
<path d="M600.0 700.0 C608.7 696.7 630.8 702.1 640.0 705.0 C649.2 707.9 662.3 716.5 669.0 722.0 C675.7 727.5 685.9 738.3 690.0 746.0 C694.1 753.7 700.5 772.5 700.0 780.0 C699.5 787.5 690.8 797.2 686.0 802.0 C681.2 806.8 669.1 814.7 664.0 816.0 C658.9 817.3 651.7 814.1 648.0 812.0 C644.3 809.9 638.9 803.7 636.0 800.0 C633.1 796.3 629.2 788.3 626.0 784.0 C622.8 779.7 616.8 771.9 612.0 768.0 C607.2 764.1 594.9 760.1 590.0 755.0 C585.1 749.9 573.7 737.3 575.0 730.0 C576.3 722.7 591.3 703.3 600.0 700.0Z" fill="#8a5c48" opacity="0.35"/>
</g>
<g filter="url(#rough)">
<path d="M640.0 610.0 C633.0 604.6 611.7 595.8 600.0 590.0 C588.3 584.2 553.1 566.4 540.0 560.0 C526.9 553.6 494.6 544.8 488.0 535.0 C481.4 525.2 483.0 489.5 483.0 476.0 C483.0 462.5 485.7 431.4 488.0 419.0 C490.3 406.6 498.0 381.1 503.0 370.0 C508.0 358.9 523.6 333.1 531.0 324.0 C538.4 314.9 557.4 298.3 566.0 292.0 C574.6 285.7 595.4 274.1 605.0 270.0 C614.6 265.9 637.6 260.1 648.0 257.0 C658.4 253.8 683.3 247.0 694.0 243.0 C704.7 239.0 729.7 226.7 740.0 223.0 C750.3 219.3 772.9 211.9 782.0 211.0 C791.1 210.1 810.5 213.2 818.0 215.0 C825.5 216.8 840.9 223.4 846.0 226.0 C851.1 228.6 854.6 236.2 862.0 237.0 C869.4 237.8 897.3 231.9 909.0 233.0 C920.7 234.1 951.6 242.0 962.0 246.0 C972.4 250.0 990.1 261.6 998.0 267.0 C1005.9 272.4 1021.8 287.9 1030.0 292.0 C1038.2 296.1 1061.0 298.7 1068.0 302.0 C1075.0 305.3 1086.4 314.6 1090.0 320.0 C1093.6 325.4 1097.4 341.0 1099.0 348.0 C1100.6 355.0 1101.8 372.5 1104.0 380.0 C1106.2 387.5 1114.3 404.5 1118.0 412.0 C1121.7 419.5 1133.3 437.4 1136.0 444.0 C1138.7 450.6 1141.0 462.8 1141.0 469.0 C1141.0 475.2 1138.2 491.5 1136.0 497.0 C1133.8 502.5 1126.0 512.1 1122.0 516.0 C1118.0 519.9 1104.8 526.5 1102.0 530.0 C1099.2 533.5 1099.2 542.5 1098.0 546.0 C1096.8 549.5 1093.9 558.8 1092.0 560.0 C1090.1 561.2 1084.8 557.6 1082.0 556.0 C1079.2 554.4 1071.3 548.1 1068.0 546.0 C1064.7 543.9 1056.7 540.3 1054.0 538.0 C1051.3 535.7 1047.8 528.3 1045.0 526.0 C1042.2 523.7 1032.1 520.0 1030.0 518.0 C1027.9 516.0 1026.5 511.9 1027.0 509.0 C1027.5 506.1 1032.5 497.6 1034.0 493.0 C1035.5 488.4 1039.3 473.7 1040.0 470.0 C1040.7 466.3 1040.8 460.8 1040.0 461.0 C1039.2 461.2 1035.7 468.3 1033.0 472.0 C1030.3 475.7 1021.4 489.0 1017.0 493.0 C1012.6 497.0 1000.7 503.8 995.0 506.0 C989.3 508.2 974.3 511.6 968.0 512.0 C961.7 512.4 945.4 510.4 941.0 509.0 C936.6 507.6 929.9 503.1 930.0 500.0 C930.1 496.9 939.7 486.4 942.0 482.0 C944.3 477.6 948.8 466.7 950.0 462.0 C951.2 457.3 952.7 445.9 952.0 442.0 C951.3 438.1 945.8 428.5 944.0 429.0 C942.2 429.5 938.3 441.7 937.0 446.0 C935.7 450.3 934.3 460.9 933.0 466.0 C931.7 471.1 928.0 486.1 926.0 490.0 C924.0 493.9 919.5 497.7 916.0 499.0 C912.5 500.3 902.4 501.4 896.0 501.0 C889.6 500.6 866.7 497.5 861.0 496.0 C855.3 494.5 852.4 488.7 847.0 488.0 C841.6 487.3 819.3 487.9 815.0 490.0 C810.7 492.1 812.2 501.2 810.0 506.0 C807.8 510.8 799.5 525.6 796.0 531.0 C792.5 536.4 783.5 546.5 780.0 552.0 C776.5 557.5 769.3 573.1 766.0 578.0 C762.7 582.9 755.6 590.9 752.0 594.0 C748.4 597.1 739.7 602.3 735.0 605.0 C730.3 607.7 717.5 614.3 712.0 617.0 C706.5 619.7 694.1 625.8 688.0 628.0 C681.9 630.2 665.6 638.1 660.0 636.0 C654.4 633.9 647.0 615.4 640.0 610.0Z" fill="#211e27" />
</g>
<g filter="url(#chalk)" opacity="0.75">
<path d="M498.0 430.0 C499.7 423.3 503.7 402.0 508.0 390.0 C512.3 378.0 517.3 368.0 524.0 358.0 C530.7 348.0 544.0 334.7 548.0 330.0" fill="none" stroke="#7a4a38" stroke-width="8" stroke-linecap="round" stroke-linejoin="round" />
<path d="M560.0 318.0 C565.0 314.7 578.3 305.0 590.0 298.0 C601.7 291.0 618.3 281.7 630.0 276.0 C641.7 270.3 655.0 266.0 660.0 264.0" fill="none" stroke="#7a4a38" stroke-width="6" stroke-linecap="round" stroke-linejoin="round" />
<path d="M700.0 250.0 C705.8 247.7 724.2 240.7 735.0 236.0 C745.8 231.3 760.0 224.3 765.0 222.0" fill="none" stroke="#7a4a38" stroke-width="5" stroke-linecap="round" stroke-linejoin="round" />
<path d="M560.0 360.0 C566.7 355.0 586.7 337.5 600.0 330.0 C613.3 322.5 633.3 317.5 640.0 315.0" fill="none" stroke="#7a4a38" stroke-width="5" stroke-linecap="round" stroke-linejoin="round" />
<path d="M836.0 408.0 C837.0 411.7 841.3 423.0 842.0 430.0 C842.7 437.0 840.3 446.7 840.0 450.0" fill="none" stroke="#7a4a38" stroke-width="8" stroke-linecap="round" stroke-linejoin="round" />
<path d="M900.0 416.0 C901.0 420.0 905.5 432.3 906.0 440.0 C906.5 447.7 903.5 458.3 903.0 462.0" fill="none" stroke="#7a4a38" stroke-width="8" stroke-linecap="round" stroke-linejoin="round" />
<path d="M968.0 394.0 C969.0 398.0 973.3 410.3 974.0 418.0 C974.7 425.7 972.3 436.3 972.0 440.0" fill="none" stroke="#7a4a38" stroke-width="8" stroke-linecap="round" stroke-linejoin="round" />
<path d="M1024.0 408.0 C1024.7 411.7 1027.7 423.3 1028.0 430.0 C1028.3 436.7 1026.3 445.0 1026.0 448.0" fill="none" stroke="#7a4a38" stroke-width="7" stroke-linecap="round" stroke-linejoin="round" />
<path d="M1066.0 436.0 C1067.2 439.2 1072.2 449.3 1073.0 455.0 C1073.8 460.7 1071.3 467.5 1071.0 470.0" fill="none" stroke="#7a4a38" stroke-width="7" stroke-linecap="round" stroke-linejoin="round" />
<path d="M1000.0 330.0 C1006.7 333.3 1028.3 341.7 1040.0 350.0 C1051.7 358.3 1065.0 375.0 1070.0 380.0" fill="none" stroke="#7a4a38" stroke-width="5" stroke-linecap="round" stroke-linejoin="round" />
<path d="M800.0 300.0 C805.0 305.0 821.7 318.3 830.0 330.0 C838.3 341.7 846.7 363.3 850.0 370.0" fill="none" stroke="#7a4a38" stroke-width="4" stroke-linecap="round" stroke-linejoin="round" />
<path d="M940.0 300.0 C943.3 306.7 954.2 326.7 960.0 340.0 C965.8 353.3 972.5 373.3 975.0 380.0" fill="none" stroke="#7a4a38" stroke-width="4" stroke-linecap="round" stroke-linejoin="round" />
<path d="M1100.0 480.0 C1101.7 483.3 1110.3 493.0 1110.0 500.0 C1109.7 507.0 1100.0 518.3 1098.0 522.0" fill="none" stroke="#7a4a38" stroke-width="6" stroke-linecap="round" stroke-linejoin="round" />
<path d="M760.0 540.0 C765.0 535.8 782.3 522.3 790.0 515.0 C797.7 507.7 803.3 499.2 806.0 496.0" fill="none" stroke="#7a4a38" stroke-width="5" stroke-linecap="round" stroke-linejoin="round" />
<path d="M510.0 760.0 C512.0 766.7 519.7 788.3 522.0 800.0 C524.3 811.7 523.7 825.0 524.0 830.0" fill="none" stroke="#7a4a38" stroke-width="4" stroke-linecap="round" stroke-linejoin="round" />
<path d="M560.0 960.0 C562.5 966.7 570.0 986.7 575.0 1000.0 C580.0 1013.3 587.5 1033.3 590.0 1040.0" fill="none" stroke="#7a4a38" stroke-width="4" stroke-linecap="round" stroke-linejoin="round" />
</g>
<g opacity="0.5" filter="url(#soft1)">
<path d="M520.0 520.0 C521.7 506.7 523.3 463.3 530.0 440.0 C536.7 416.7 545.0 398.3 560.0 380.0 C575.0 361.7 596.7 343.3 620.0 330.0 C643.3 316.7 686.7 305.0 700.0 300.0" fill="none" stroke="#35202a" stroke-width="3" stroke-linecap="round" stroke-linejoin="round" />
<path d="M600.0 560.0 C606.7 545.0 623.3 496.7 640.0 470.0 C656.7 443.3 676.7 420.0 700.0 400.0 C723.3 380.0 753.3 361.7 780.0 350.0 C806.7 338.3 846.7 333.3 860.0 330.0" fill="none" stroke="#35202a" stroke-width="3" stroke-linecap="round" stroke-linejoin="round" />
<path d="M700.0 560.0 C710.0 546.7 738.3 501.7 760.0 480.0 C781.7 458.3 806.7 443.3 830.0 430.0 C853.3 416.7 888.3 405.0 900.0 400.0" fill="none" stroke="#35202a" stroke-width="3" stroke-linecap="round" stroke-linejoin="round" />
<path d="M880.0 250.0 C888.3 256.7 916.7 275.0 930.0 290.0 C943.3 305.0 953.3 321.7 960.0 340.0 C966.7 358.3 968.3 390.0 970.0 400.0" fill="none" stroke="#35202a" stroke-width="3" stroke-linecap="round" stroke-linejoin="round" />
<path d="M1010.0 300.0 C1016.7 310.0 1040.0 340.0 1050.0 360.0 C1060.0 380.0 1066.7 410.0 1070.0 420.0" fill="none" stroke="#35202a" stroke-width="3" stroke-linecap="round" stroke-linejoin="round" />
</g>
<g filter="url(#rough2)">
<path d="M774.0 574.0 C769.3 578.3 755.7 592.5 746.0 600.0 C736.3 607.5 726.3 613.3 716.0 619.0 C705.7 624.7 693.3 630.5 684.0 634.0 C674.7 637.5 664.0 639.0 660.0 640.0" fill="none" stroke="#211e27" stroke-width="18" stroke-linecap="round" stroke-linejoin="round" />
<path d="M679.0 613.0 C681.7 612.2 689.7 609.8 695.0 608.0 C700.3 606.2 708.3 603.0 711.0 602.0" fill="none" stroke="#8b624e" stroke-width="3.5" stroke-linecap="round" stroke-linejoin="round" opacity="0.9" />
<path d="M641.0 606.0 C642.5 610.0 646.3 621.2 650.0 630.0 C653.7 638.8 658.5 647.5 663.0 659.0 C667.5 670.5 670.7 685.7 677.0 699.0 C683.3 712.3 694.5 727.8 701.0 739.0 C707.5 750.2 713.0 757.8 716.0 766.0 C719.0 774.2 721.2 781.0 719.0 788.0 C716.8 795.0 709.7 803.0 703.0 808.0 C696.3 813.0 687.0 815.3 679.0 818.0 C671.0 820.7 662.5 822.3 655.0 824.0 C647.5 825.7 637.5 827.3 634.0 828.0" fill="none" stroke="#211e27" stroke-width="29" stroke-linecap="round" stroke-linejoin="round" />
<path d="M655.0 890.0 C657.2 892.0 663.0 898.2 668.0 902.0 C673.0 905.8 679.7 910.5 685.0 913.0 C690.3 915.5 695.2 917.3 700.0 917.0 C704.8 916.7 710.3 913.7 714.0 911.0 C717.7 908.3 720.7 902.7 722.0 901.0" fill="none" stroke="#211e27" stroke-width="13" stroke-linecap="round" stroke-linejoin="round" />
<path d="M600.0 800.0 C604.4 793.5 634.2 811.2 640.0 815.0 C645.8 818.8 655.7 832.5 658.0 838.0 C660.3 843.5 662.5 863.8 663.0 870.0 C663.5 876.2 663.3 894.5 663.0 900.0 C662.7 905.5 661.3 921.0 660.0 925.0 C658.7 929.0 652.4 938.9 650.0 940.0 C647.6 941.1 638.6 936.0 636.0 936.0 C633.4 936.0 625.2 937.0 624.0 940.0 C622.8 943.0 625.1 963.8 624.0 966.0 C622.9 968.2 615.1 961.4 613.0 962.0 C610.9 962.6 604.6 972.2 603.0 972.0 C601.4 971.8 597.7 969.2 597.0 960.0 C596.3 950.8 595.7 896.0 596.0 880.0 C596.3 864.0 595.6 806.5 600.0 800.0Z" fill="#211e27" />
<path d="M630.0 925.0 C630.8 930.8 634.0 947.5 635.0 960.0 C636.0 972.5 636.5 987.5 636.0 1000.0 C635.5 1012.5 634.0 1025.0 632.0 1035.0 C630.0 1045.0 625.3 1055.8 624.0 1060.0" fill="none" stroke="#211e27" stroke-width="27" stroke-linecap="round" stroke-linejoin="round" />
<path d="M656.0 905.0 C657.5 910.8 662.8 928.3 665.0 940.0 C667.2 951.7 668.5 963.3 669.0 975.0 C669.5 986.7 669.2 999.2 668.0 1010.0 C666.8 1020.8 665.0 1030.8 662.0 1040.0 C659.0 1049.2 652.0 1060.8 650.0 1065.0" fill="none" stroke="#211e27" stroke-width="28" stroke-linecap="round" stroke-linejoin="round" />
<path d="M596.0 1062.0 C603.3 1062.7 627.8 1063.7 640.0 1066.0 C652.2 1068.3 659.7 1071.5 669.0 1076.0 C678.3 1080.5 688.7 1087.3 696.0 1093.0 C703.3 1098.7 709.8 1105.2 713.0 1110.0 C716.2 1114.8 716.8 1118.3 715.0 1122.0 C713.2 1125.7 707.8 1128.8 702.0 1132.0 C696.2 1135.2 686.3 1138.7 680.0 1141.0 C673.7 1143.3 666.7 1145.2 664.0 1146.0" fill="none" stroke="#211e27" stroke-width="18" stroke-linecap="round" stroke-linejoin="round" />
<path d="M596.0 1040.0 C598.7 1042.5 606.3 1051.3 612.0 1055.0 C617.7 1058.7 627.0 1060.8 630.0 1062.0" fill="none" stroke="#211e27" stroke-width="18" stroke-linecap="round" stroke-linejoin="round" />
</g>
<path d="M646.0 928.0 C646.7 932.5 649.3 946.7 650.0 955.0 C650.7 963.3 650.0 974.2 650.0 978.0" fill="none" stroke="#5a3a30" stroke-width="3.5" stroke-linecap="round" stroke-linejoin="round" opacity="0.8" />
<g filter="url(#chalk2)">
<path d="M802.0 558.0 C805.3 555.7 814.7 548.2 822.0 544.0 C829.3 539.8 835.5 535.7 846.0 533.0 C856.5 530.3 870.2 528.3 885.0 528.0 C899.8 527.7 921.2 529.5 935.0 531.0 C948.8 532.5 959.0 535.3 968.0 537.0 C977.0 538.7 985.5 540.3 989.0 541.0" fill="none" stroke="#211e27" stroke-width="19" stroke-linecap="round" stroke-linejoin="round" />
</g>
<path d="M806.0 555.0 C809.0 553.0 817.3 546.7 824.0 543.0 C830.7 539.3 835.8 535.5 846.0 533.0 C856.2 530.5 870.2 528.3 885.0 528.0 C899.8 527.7 921.5 529.6 935.0 531.0 C948.5 532.4 960.8 535.6 966.0 536.5" fill="none" stroke="#211e27" stroke-width="9" stroke-linecap="round" stroke-linejoin="round" opacity="0.8" />
<g filter="url(#rough2)">
<path d="M806.0 578.0 C811.7 576.2 828.5 570.3 840.0 567.0 C851.5 563.7 864.2 560.3 875.0 558.0 C885.8 555.7 900.0 553.8 905.0 553.0" fill="none" stroke="#50342a" stroke-width="6.5" stroke-linecap="round" stroke-linejoin="round" opacity="0.9" />
</g>
<path d="M847.0 604.0 L868.0 598.0 L889.0 593.0 L892.0 622.0 L871.0 622.0Z" fill="#d8d0c8" />
<path d="M889 592 C889 577 900 568 913 569 C926 571 933 582 932 597 C932 613 925 624 914 624 C900 624 889 615 889 601 Z" fill="url(#irisg)"/>
<ellipse cx="911" cy="612" rx="12" ry="8" fill="#7d5358" opacity="0.6" filter="url(#soft1)"/>
<path d="M814.0 596.0 C816.3 594.0 842.3 585.6 850.0 583.0 C857.7 580.4 873.8 575.6 880.0 574.0 C886.2 572.4 900.9 567.4 903.0 569.0 C905.1 570.6 899.8 585.3 898.0 588.0 C896.2 590.7 891.5 591.0 888.0 592.0 C884.5 593.0 872.8 595.6 868.0 597.0 C863.2 598.4 851.4 603.6 847.0 604.0 C842.6 604.4 833.9 600.9 830.0 600.0 C826.1 599.1 811.7 598.0 814.0 596.0Z" fill="#3f2923" />
<path d="M816.0 598.0 C819.2 599.8 829.0 605.7 835.0 609.0 C841.0 612.3 846.0 615.3 852.0 618.0 C858.0 620.7 863.0 623.5 871.0 625.0 C879.0 626.5 895.2 626.7 900.0 627.0" fill="none" stroke="#4a2d26" stroke-width="6" stroke-linecap="round" stroke-linejoin="round" />
<ellipse cx="942.5" cy="603" rx="7.5" ry="12.5" fill="#c39373" transform="rotate(-12 942.5 603)"/>
<g filter="url(#rough2)">
<path d="M1035.0 570.0 C1036.6 567.3 1045.3 567.5 1050.0 568.0 C1054.7 568.5 1065.2 571.5 1070.0 574.0 C1074.8 576.5 1083.1 583.5 1086.0 587.0 C1088.9 590.5 1092.3 596.8 1092.0 600.0 C1091.7 603.2 1086.7 608.3 1084.0 611.0 C1081.3 613.7 1074.4 618.0 1072.0 620.0 C1069.6 622.0 1068.4 626.0 1066.0 626.0 C1063.6 626.0 1056.9 622.7 1054.0 620.0 C1051.1 617.3 1046.1 610.3 1044.0 606.0 C1041.9 601.7 1039.2 592.8 1038.0 588.0 C1036.8 583.2 1033.4 572.7 1035.0 570.0Z" fill="#563930" />
</g>
<ellipse cx="1059" cy="600" rx="8" ry="12" fill="#6d4548"/>
<g filter="url(#soft1)">
<path d="M1033.0 569.0 C1033.7 573.3 1035.7 586.5 1037.0 595.0 C1038.3 603.5 1039.8 612.5 1041.0 620.0 C1042.2 627.5 1043.5 636.7 1044.0 640.0" fill="none" stroke="#4b2c22" stroke-width="7" stroke-linecap="round" stroke-linejoin="round" opacity="0.85" />
<path d="M1044.0 640.0 C1044.7 645.0 1046.7 660.0 1048.0 670.0 C1049.3 680.0 1050.8 691.3 1052.0 700.0 C1053.2 708.7 1055.2 713.3 1055.0 722.0 C1054.8 730.7 1051.7 747.0 1051.0 752.0" fill="none" stroke="#5a382c" stroke-width="6.5" stroke-linecap="round" stroke-linejoin="round" opacity="0.6" />
</g>
<g filter="url(#soft1)">
<path d="M972.0 685.0 C970.3 688.5 964.0 700.2 962.0 706.0 C960.0 711.8 959.7 715.2 960.0 720.0 C960.3 724.8 963.3 732.5 964.0 735.0" fill="none" stroke="#6a4232" stroke-width="5" stroke-linecap="round" stroke-linejoin="round" opacity="0.8" />
</g>
<g filter="url(#soft1)">
<path d="M962.0 734.0 C965.0 734.7 972.8 735.3 980.0 738.0 C987.2 740.7 997.2 747.0 1005.0 750.0 C1012.8 753.0 1019.7 755.3 1027.0 756.0 C1034.3 756.7 1045.3 754.3 1049.0 754.0" fill="none" stroke="#4b2c22" stroke-width="6" stroke-linecap="round" stroke-linejoin="round" opacity="0.9" />
</g>
<path d="M887.0 830.0 C887.0 828.7 908.3 824.5 916.0 821.0 C923.7 817.5 937.1 808.4 945.0 804.0 C952.9 799.6 969.1 789.9 975.0 788.0 C980.9 786.1 985.3 789.2 989.0 790.0 C992.7 790.8 999.1 793.7 1003.0 794.0 C1006.9 794.3 1014.3 791.1 1018.0 792.0 C1021.7 792.9 1029.4 798.5 1031.0 801.0 C1032.6 803.5 1030.7 808.7 1030.0 811.0 C1029.3 813.3 1029.5 815.9 1026.0 818.0 C1022.5 820.1 1012.5 825.4 1004.0 827.0 C995.5 828.6 972.1 829.1 962.0 830.0 C951.9 830.9 934.1 833.9 928.0 834.0 C921.9 834.1 921.5 831.5 916.0 831.0 C910.5 830.5 887.0 831.3 887.0 830.0Z" fill="#54302e" />
<path d="M928.0 834.0 C930.7 830.5 951.9 829.9 962.0 829.0 C972.1 828.1 995.6 827.9 1004.0 827.0 C1012.4 826.1 1022.5 820.5 1025.0 822.0 C1027.5 823.5 1024.2 833.6 1023.0 838.0 C1021.8 842.4 1018.5 850.9 1016.0 855.0 C1013.5 859.1 1007.9 866.2 1004.0 869.0 C1000.1 871.8 992.2 874.9 987.0 876.0 C981.8 877.1 968.9 878.9 965.0 877.0 C961.1 875.1 961.1 864.9 958.0 862.0 C954.9 859.1 946.0 858.7 942.0 855.0 C938.0 851.3 925.3 837.5 928.0 834.0Z" fill="#5f3b3e" />
<path d="M928.0 834.0 C930.7 830.9 955.7 830.5 962.0 832.0 C968.3 833.5 974.2 841.3 975.0 845.0 C975.8 848.7 970.3 857.7 968.0 860.0 C965.7 862.3 961.5 862.7 958.0 862.0 C954.5 861.3 946.0 858.7 942.0 855.0 C938.0 851.3 925.3 837.1 928.0 834.0Z" fill="#76525a" />
<ellipse cx="918" cy="835.5" rx="6.5" ry="4" fill="#b58466"/>
<g fill="none" stroke="#4a4747" stroke-width="2.8" stroke-linecap="round" stroke-linejoin="round"><path d="M955 1054c-4-2.500-11-1.500-13 2.500c-2 4.500 10.500 5.500 9.500 10.500c-1 5-10 6-14.500 2.500"/><path d="M976 1053l-12.500 1.500l-3.500 17.500l13.500-1M961.500 1063l10-1"/><path d="M981 1053c-1 6-2.500 12-1 16c2 4.500 9 4.500 12.500 1c3.500-4 6-11 7.500-17"/><path d="M1016 1055l-1.500 18"/></g>
<circle cx="992" cy="1105" r="2" fill="#b5b0ab"/>
<!-- ART-END -->
</svg>
</body>
</html>
